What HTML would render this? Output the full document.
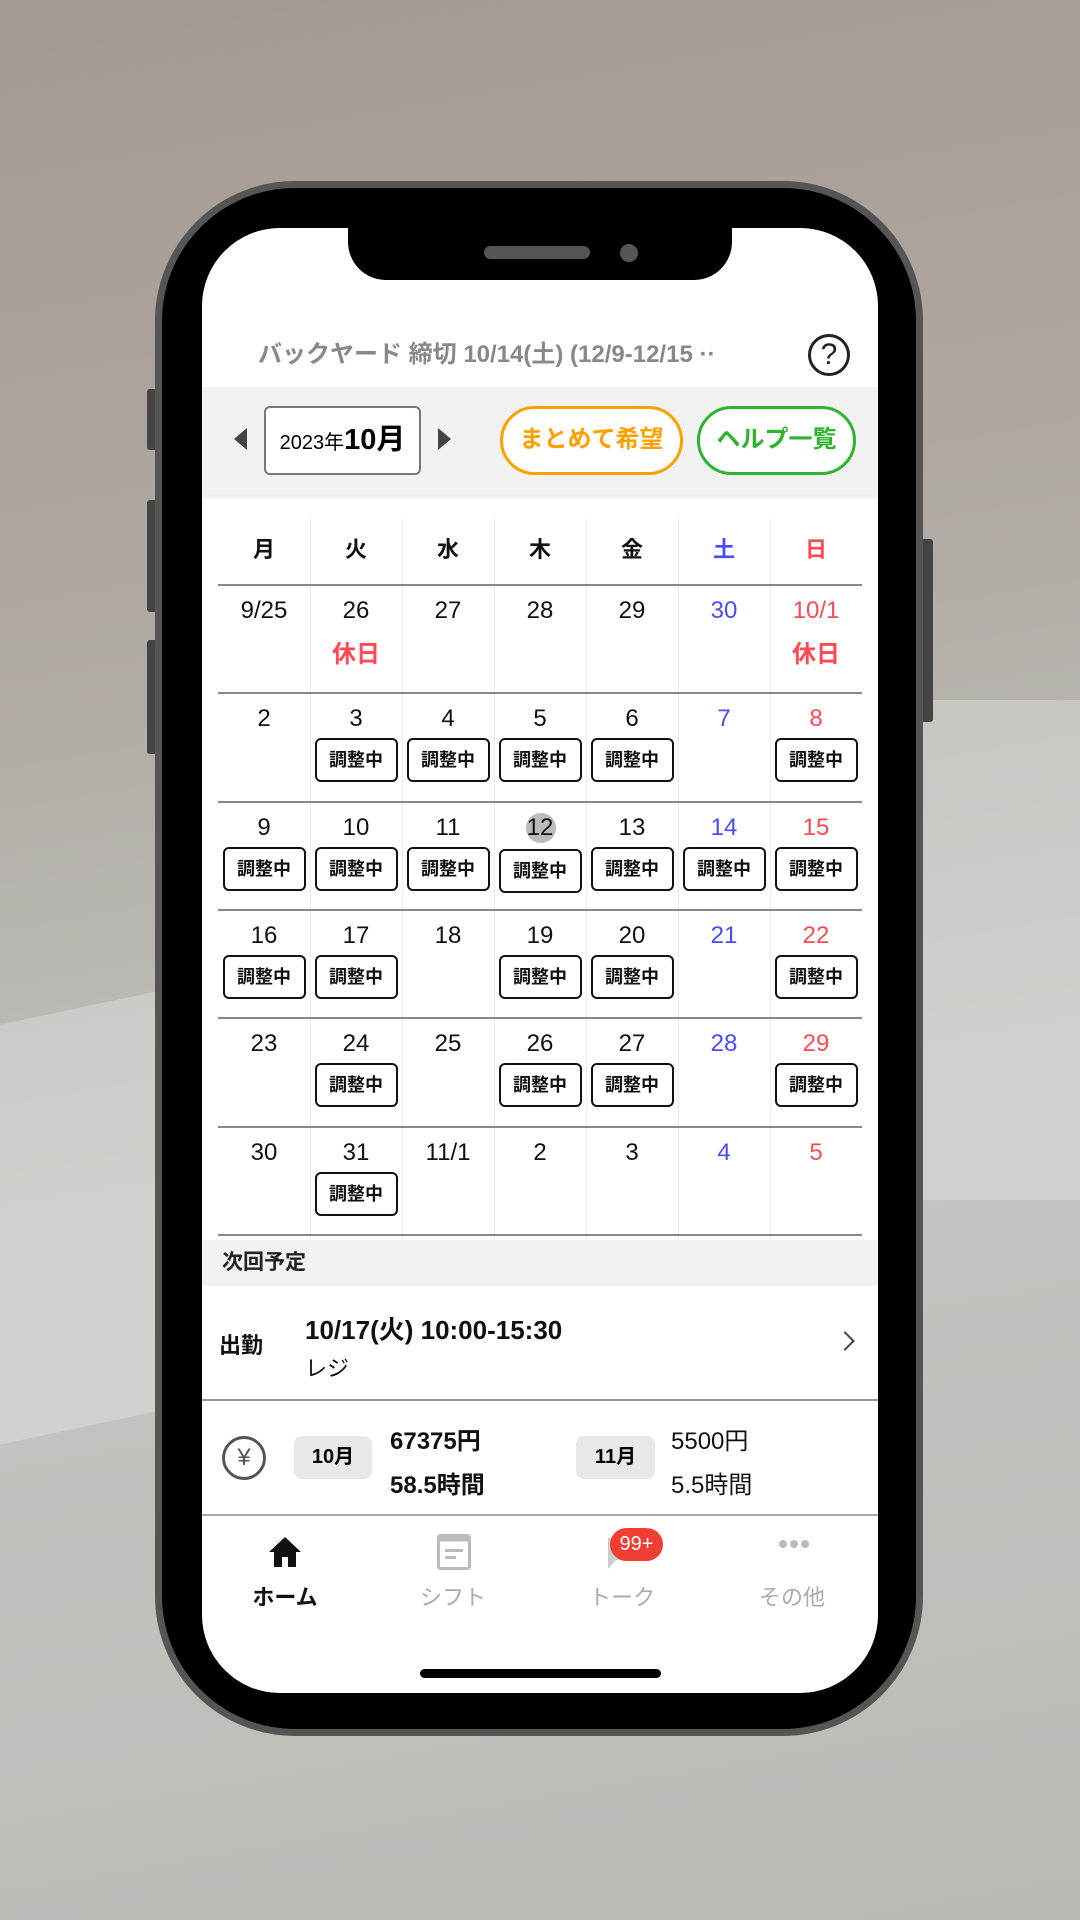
<!DOCTYPE html>
<html><head><meta charset="utf-8"><style>
*{margin:0;padding:0;box-sizing:border-box}
body{width:1080px;height:1920px;overflow:hidden;position:relative;font-family:"Liberation Sans","Noto Sans CJK JP",sans-serif;background:linear-gradient(170deg,#a39990 0%,#b2aca6 35%,#c4c4c0 60%,#bdbab5 100%)}
.abs{position:absolute}
.phone{left:155px;top:181px;width:768px;height:1555px;border-radius:140px;background:#000;border:7px solid #555}
.btn{background:#444;border-radius:3px}
.screen{left:202px;top:228px;width:676px;height:1465px;border-radius:78px;background:#fff;overflow:hidden}
.notch{left:146px;top:-2px;width:384px;height:54px;background:#000;border-radius:0 0 38px 38px}
.c{position:absolute;text-align:center}
.bd{position:absolute;width:83px;height:44px;border:2px solid #111;border-radius:6px;font-weight:bold;font-size:18px;line-height:40px;text-align:center;color:#111}
.num{position:absolute;width:92px;text-align:center;font-size:24px;color:#111}
</style></head><body>
<div class="abs" style="left:0;top:980px;width:420px;height:420px;background:rgba(235,235,232,.35);transform:skewY(-12deg)"></div>
<div class="abs" style="left:900px;top:700px;width:180px;height:500px;background:rgba(235,235,232,.35)"></div>
<div class="abs btn" style="left:147px;top:389px;width:10px;height:61px"></div>
<div class="abs btn" style="left:147px;top:500px;width:10px;height:112px"></div>
<div class="abs btn" style="left:147px;top:640px;width:10px;height:114px"></div>
<div class="abs btn" style="left:921px;top:539px;width:12px;height:183px"></div>
<div class="abs phone"></div>
<div class="abs screen">
 <div class="abs notch"><div class="abs" style="left:136px;top:20px;width:106px;height:13px;border-radius:7px;background:#555"></div><div class="abs" style="left:272px;top:18px;width:18px;height:18px;border-radius:50%;background:#555"></div></div>
 <div class="abs" style="left:56px;top:106px;font-size:24px;font-weight:bold;color:#888;white-space:nowrap">バックヤード 締切 10/14(土) (12/9-12/15 ··</div>
 <div class="abs" style="left:606px;top:106px;width:42px;height:42px;border:3px solid #222;border-radius:50%;text-align:center;font-size:30px;line-height:36px;color:#222">?</div>
 <div class="abs" style="left:0;top:159px;width:676px;height:108px;background:#f2f2f2;box-shadow:0 3px 4px rgba(0,0,0,.08)"></div>
 <div class="abs" style="left:32px;top:200px;width:0;height:0;border-top:11px solid transparent;border-bottom:11px solid transparent;border-right:13px solid #444"></div>
 <div class="abs" style="left:62px;top:178px;width:157px;height:69px;background:#fff;border:2px solid #777;border-radius:6px;text-align:center;line-height:64px;white-space:nowrap"><span style="font-size:20px">2023年</span><b style="font-size:29px">10月</b></div>
 <div class="abs" style="left:236px;top:200px;width:0;height:0;border-top:11px solid transparent;border-bottom:11px solid transparent;border-left:13px solid #444"></div>
 <div class="abs" style="left:298px;top:178px;width:183px;height:69px;border:3.5px solid #ffa000;border-radius:35px;background:#fff;color:#ffa000;font-weight:bold;font-size:24px;text-align:center;line-height:62px">まとめて希望</div>
 <div class="abs" style="left:495px;top:178px;width:159px;height:69px;border:3.5px solid #2db52d;border-radius:35px;background:#fff;color:#2db52d;font-weight:bold;font-size:24px;text-align:center;line-height:62px">ヘルプ一覧</div>
 <div id="cal" class="abs" style="left:16px;top:290px;width:644px;height:725px"></div>
 <div class="abs" style="left:0;top:1012px;width:676px;height:46px;background:#f2f2f2;font-weight:bold;font-size:21px;line-height:46px;padding-left:20px;color:#222">次回予定</div>
 <div class="abs" style="left:17px;top:1100px;font-weight:bold;font-size:22px;color:#111">出勤</div>
 <div class="abs" style="left:103px;top:1082px;font-weight:bold;font-size:26px;color:#111">10/17(火) 10:00-15:30</div>
 <div class="abs" style="left:103px;top:1123px;font-size:22px;color:#111">レジ</div>
 <div class="abs" style="left:636px;top:1106px;width:14px;height:14px;border-top:2px solid #444;border-right:2px solid #444;transform:rotate(45deg)"></div>
 <div class="abs" style="left:0;top:1171px;width:676px;height:2px;background:#999"></div>
 <div class="abs" style="left:20px;top:1208px;width:44px;height:44px;border:3px solid #555;border-radius:50%;text-align:center;font-size:24px;line-height:38px;color:#555">¥</div>
 <div class="abs" style="left:92px;top:1208px;width:78px;height:43px;background:#e8e8e8;border-radius:8px;text-align:center;line-height:43px;font-weight:bold;font-size:20px">10月</div>
 <div class="abs" style="left:188px;top:1192px;font-weight:bold;font-size:24px;line-height:44px;color:#111">67375円<br>58.5時間</div>
 <div class="abs" style="left:374px;top:1208px;width:79px;height:43px;background:#e8e8e8;border-radius:8px;text-align:center;line-height:43px;font-weight:bold;font-size:20px">11月</div>
 <div class="abs" style="left:469px;top:1192px;font-size:24px;line-height:44px;color:#111">5500円<br>5.5時間</div>
 <div class="abs" style="left:0;top:1286px;width:676px;height:2px;background:#aaa"></div>
 <svg class="abs" style="left:65px;top:1307px" width="36" height="34" viewBox="0 0 36 34"><path d="M18 2 L34 17 H29 V32 H21 V22 H15 V32 H7 V17 H2 Z" fill="#111"/></svg>
 <div class="c" style="left:20px;top:1352px;width:126px;font-weight:bold;font-size:22px;color:#111">ホーム</div>
 <svg class="abs" style="left:235px;top:1306px" width="34" height="36" viewBox="0 0 34 36"><rect x="1.5" y="1.5" width="31" height="33" rx="2" fill="none" stroke="#bbb" stroke-width="3"/><rect x="1.5" y="1.5" width="31" height="6" fill="#bbb"/><rect x="8" y="15" width="18" height="3" fill="#bbb"/><rect x="8" y="22" width="11" height="3" fill="#bbb"/></svg>
 <div class="c" style="left:188px;top:1352px;width:126px;font-size:22px;color:#aaa">シフト</div>
 <svg class="abs" style="left:404px;top:1308px" width="36" height="36" viewBox="0 0 36 36"><path d="M2 2 H34 V24 H10 L2 33 Z" fill="#ccc"/></svg>
 <div class="abs" style="left:408px;top:1300px;width:53px;height:33px;border-radius:17px;background:#f03e32;color:#fff;font-size:20px;text-align:center;line-height:33px">99+</div>
 <div class="c" style="left:357px;top:1352px;width:126px;font-size:22px;color:#aaa">トーク</div>
 <div class="abs" style="left:577px;top:1312px;font-size:0"><span style="display:inline-block;width:8px;height:8px;border-radius:50%;background:#bbb;margin-right:3px"></span><span style="display:inline-block;width:8px;height:8px;border-radius:50%;background:#bbb;margin-right:3px"></span><span style="display:inline-block;width:8px;height:8px;border-radius:50%;background:#bbb"></span></div>
 <div class="c" style="left:527px;top:1352px;width:126px;font-size:22px;color:#aaa">その他</div>
 <div class="abs" style="left:218px;top:1441px;width:241px;height:9px;border-radius:5px;background:#000"></div>
</div>
<script>
(function(){
var cal=document.getElementById('cal'),h='';
var days=['月','火','水','木','金','土','日'];
var rows=[['9/25','26','27','28','29','30','10/1'],['2','3','4','5','6','7','8'],['9','10','11','12','13','14','15'],['16','17','18','19','20','21','22'],['23','24','25','26','27','28','29'],['30','31','11/1','2','3','4','5']];
var marks=[[0,'休',0,0,0,0,'休'],[0,1,1,1,1,0,1],[1,1,1,1,1,1,1],[1,1,0,1,1,0,1],[0,1,0,1,1,0,1],[0,1,0,0,0,0,0]];
var H0=66,RH=108.3;
for(var i=0;i<7;i++){var col=i==5?'#4a4aff':i==6?'#ff4a55':'#111';h+='<div class="num" style="left:'+(i*92)+'px;top:14px;font-weight:bold;font-size:22px;color:'+col+'">'+days[i]+'</div>';}
for(var i=1;i<7;i++)h+='<div class="abs" style="left:'+(i*92)+'px;top:0;width:1px;height:725px;background:#ececec"></div>';
for(var r=0;r<=6;r++)h+='<div class="abs" style="left:0;top:'+(H0+r*RH)+'px;width:644px;height:2px;background:#888"></div>';
for(var r=0;r<6;r++){var tp=H0+r*RH;for(var i=0;i<7;i++){var col=i==5?'#4a4aff':i==6?'#ff4a55':'#111';
 if(r==2&&i==3)h+='<div class="abs" style="left:'+(i*92+32)+'px;top:'+(tp+12)+'px;width:30px;height:30px;border-radius:50%;background:#bbb"></div>';
 h+='<div class="num" style="left:'+(i*92)+'px;top:'+(tp+13)+'px;color:'+col+'">'+rows[r][i]+'</div>';
 var m=marks[r][i];
 if(m==='休')h+='<div class="num" style="left:'+(i*92)+'px;top:'+(tp+50)+'px;color:#ff4a55;font-weight:bold">休日</div>';
 else if(m)h+='<div class="bd" style="left:'+(i*92+4.5)+'px;top:'+(tp+46+(r==2&&i==3?2:0))+'px">調整中</div>';
}}
cal.innerHTML=h;
})();
</script>
</body></html>
